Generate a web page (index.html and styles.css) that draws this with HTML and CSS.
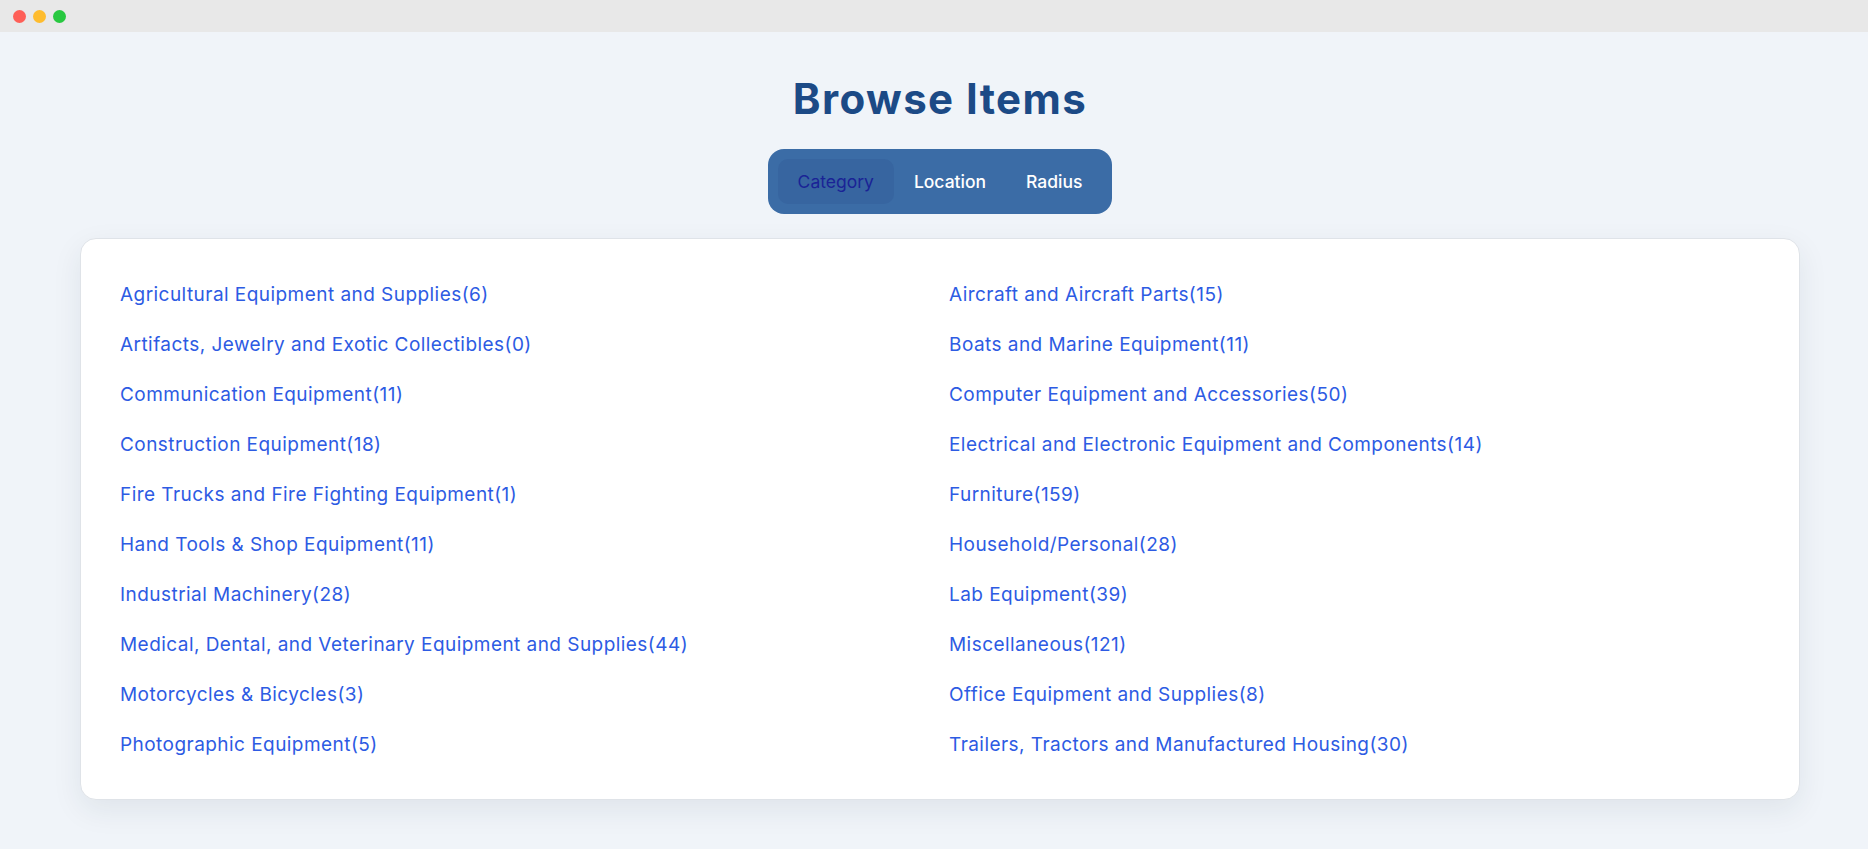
FILE: index.html
```html
<!DOCTYPE html>
<html lang="en">
<head>
<meta charset="utf-8">
<title>Browse Items</title>
<link rel="stylesheet" href="styles.css">
</head>
<body>
<div class="titlebar">
  <span class="dot red"></span>
  <span class="dot yellow"></span>
  <span class="dot green"></span>
</div>
<main class="page">
  <h1 class="title">Browse Items</h1>
  <nav class="tabs">
    <button class="tab active">Category</button>
    <button class="tab">Location</button>
    <button class="tab">Radius</button>
  </nav>
  <section class="card">
    <ul class="grid">
      <li><a href="#">Agricultural Equipment and Supplies(6)</a></li>
      <li><a href="#">Aircraft and Aircraft Parts(15)</a></li>
      <li><a href="#">Artifacts, Jewelry and Exotic Collectibles(0)</a></li>
      <li><a href="#">Boats and Marine Equipment(11)</a></li>
      <li><a href="#">Communication Equipment(11)</a></li>
      <li><a href="#">Computer Equipment and Accessories(50)</a></li>
      <li><a href="#">Construction Equipment(18)</a></li>
      <li><a href="#">Electrical and Electronic Equipment and Components(14)</a></li>
      <li><a href="#">Fire Trucks and Fire Fighting Equipment(1)</a></li>
      <li><a href="#">Furniture(159)</a></li>
      <li><a href="#">Hand Tools &amp; Shop Equipment(11)</a></li>
      <li><a href="#">Household/Personal(28)</a></li>
      <li><a href="#">Industrial Machinery(28)</a></li>
      <li><a href="#">Lab Equipment(39)</a></li>
      <li><a href="#">Medical, Dental, and Veterinary Equipment and Supplies(44)</a></li>
      <li><a href="#">Miscellaneous(121)</a></li>
      <li><a href="#">Motorcycles &amp; Bicycles(3)</a></li>
      <li><a href="#">Office Equipment and Supplies(8)</a></li>
      <li><a href="#">Photographic Equipment(5)</a></li>
      <li><a href="#">Trailers, Tractors and Manufactured Housing(30)</a></li>
    </ul>
  </section>
</main>
</body>
</html>
```

FILE: styles.css
```css
* { box-sizing: border-box; }
html, body { margin: 0; padding: 0; }
body {
  background: #f0f4f9;
  font-family: Inter, "Noto Sans", "Liberation Sans", sans-serif;
  height: 849px;
  overflow: hidden;
}
.titlebar {
  height: 32px;
  background: #e8e8e8;
  display: flex;
  align-items: center;
  gap: 7px;
  padding-left: 13px;
}
.dot {
  width: 13px;
  height: 13px;
  border-radius: 50%;
  display: block;
}
.red { background: #fe5f57; }
.yellow { background: #febc2e; }
.green { background: #28c840; }
.page {
  display: flex;
  flex-direction: column;
  align-items: center;
  padding: 0 68px 0 80px;
}
.title {
  margin: 39px 0 0;
  font-size: 42px;
  line-height: 56px;
  font-weight: 700;
  color: #1c4a86;
  letter-spacing: 1.4px;
}
.tabs {
  margin-top: 22px;
  display: flex;
  padding: 10px;
  background: #3b6ca6;
  border-radius: 16px;
}
.tab {
  font-family: inherit;
  font-size: 17.5px;
  font-weight: 500;
  color: #ffffff;
  background: transparent;
  border: none;
  height: 45px;
  padding: 0 20px;
  border-radius: 10px;
  cursor: pointer;
}
.tab.active {
  background: #3765a0;
  color: #1a2396;
  font-weight: 400;
}
.card {
  margin-top: 24px;
  width: 1720px;
  background: #ffffff;
  border: 1px solid #dfe3e8;
  border-radius: 16px;
  box-shadow: 0 10px 30px rgba(30, 45, 70, 0.08);
  padding: 40px 39px 40px;
}
.grid {
  list-style: none;
  margin: 0;
  padding: 0;
  display: grid;
  grid-template-columns: 1fr 1fr;
  column-gap: 18px;
  row-gap: 20px;
}
.grid li {
  height: 30px;
  display: flex;
  align-items: center;
}
.grid a {
  color: #2d5be3;
  text-decoration: none;
  font-size: 19px;
  letter-spacing: 0.45px;
}
```
